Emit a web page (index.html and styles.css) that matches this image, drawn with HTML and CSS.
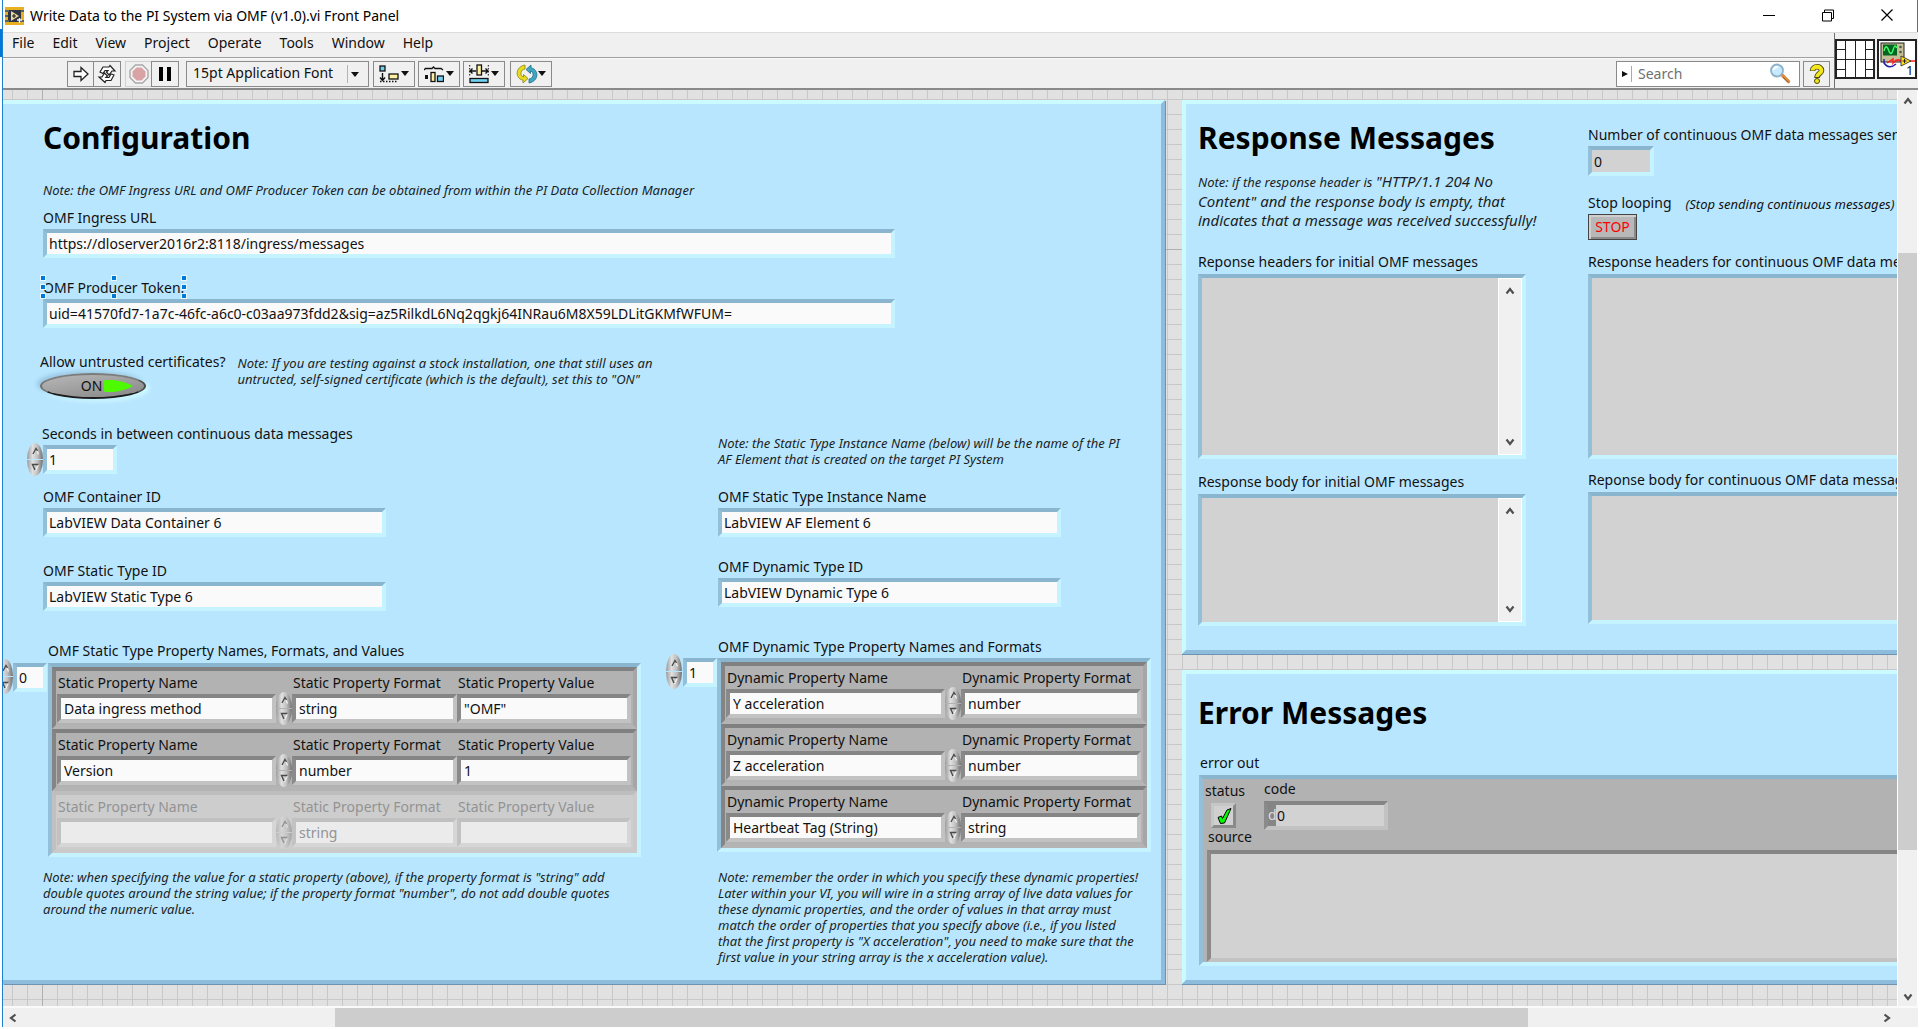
FILE: index.html
```html
<!DOCTYPE html>
<html lang="en">
<head>
<meta charset="utf-8">
<title>Write Data to the PI System via OMF (v1.0).vi Front Panel</title>
<link rel="stylesheet" href="styles.css">
</head>
<body>
<svg class="defs" aria-hidden="true">
  <symbol id="up" viewBox="0 0 15 16"><path d="M5 11.500L8 5.500L10.500 11.500" fill="none" stroke="#f4f4f4" stroke-width="1.200"/><path d="M5 11L8 5.500L9.500 8" fill="none" stroke="#4a4a4a" stroke-width="1.400"/></symbol>
  <symbol id="down" viewBox="0 0 15 16"><path d="M10.500 4.500L7.500 11" fill="none" stroke="#f4f4f4" stroke-width="1.200"/><path d="M10.500 4.500H4.500L7 10" fill="none" stroke="#4a4a4a" stroke-width="1.400"/></symbol>
  <symbol id="chev" viewBox="0 0 12 12"><path d="M2.500 8.500L6 4L9.500 8.500" fill="none" stroke="#505050" stroke-width="2.200"/></symbol>
  <symbol id="tri" viewBox="0 0 8 5"><path d="M0 0H8L4 5Z" fill="#111"/></symbol>
</svg>
<div class="window">
  <header class="titlebar">
    <svg class="appicon" viewBox="0 0 19 18"><rect width="19" height="18" fill="#e8b020"/><rect x="3" y="3" width="13" height="12" fill="#2e3440"/><path d="M0 4H4M0 9H3M0 14H4M16 4H19M16 14H19" stroke="#57606e" stroke-width="2"/><path d="M6 4L14 9L6 14Z" fill="#e9d9a0"/><path d="M7 9H11M9 7V11" stroke="#222" stroke-width="1.200"/><path d="M12 13H17M14.500 11V16" stroke="#f4f4f4" stroke-width="1.400"/></svg>
    <span class="title">Write Data to the PI System via OMF (v1.0).vi Front Panel</span>
    <div class="winbtns">
      <button aria-label="Minimize"><svg viewBox="0 0 14 14"><path d="M1 7.500H13" stroke="#000"/></svg></button>
      <button aria-label="Restore"><svg viewBox="0 0 14 14" fill="none" stroke="#000"><path d="M1.500 4.500H10.500V13H1.500ZM3.500 4.500V2H12.500V10.500H10.500"/></svg></button>
      <button aria-label="Close"><svg viewBox="0 0 14 14"><path d="M1.500 1.500L12.500 12.500M12.500 1.500L1.500 12.500" stroke="#000" stroke-width="1.200"/></svg></button>
    </div>
  </header>
  <div class="bars">
    <div class="barstack">
      <nav class="menubar"><a href="#">File</a><a href="#">Edit</a><a href="#">View</a><a href="#">Project</a><a href="#">Operate</a><a href="#">Tools</a><a href="#">Window</a><a href="#">Help</a></nav>
      <div class="toolbar">
        <div class="pair">
          <button class="tb" aria-label="Run"><svg width="18" height="18" viewBox="0 0 18 18"><path d="M2 6.500H9V2.500L16 9L9 15.500V11.500H2Z" fill="#fff" stroke="#222" stroke-width="1.300"/></svg></button>
          <button class="tb" aria-label="Run continuously"><svg width="20" height="20" viewBox="0 0 20 20" fill="#fff" stroke="#222" stroke-width="1.200"><path d="M3 8L6 3H12L13 1.500L18 7H15L12 11L9.500 8L11 6.500H8L6 9.500Z"/><path d="M17 11L14 16.500H9L8 18.500L2 13H5L7.500 9L10.500 12L9 13.500H12L14 10Z"/></svg></button>
        </div>
        <div class="pair">
          <button class="tb off" aria-label="Abort"><svg width="20" height="20" viewBox="0 0 20 20"><path d="M6.500 1H13.500L19 6.500V13.500L13.500 19H6.500L1 13.500V6.500Z" fill="#f4f4f4" stroke="#a8a8a8" stroke-width="1.400"/><path d="M7.500 3.500H12.500L16.500 7.500V12.500L12.500 16.500H7.500L3.500 12.500V7.500Z" fill="#d9a3a6"/></svg></button>
          <button class="tb" aria-label="Pause"><svg width="14" height="14" viewBox="0 0 14 14"><path d="M1 0H5V14H1ZM9 0H13V14H9Z" fill="#000"/></svg></button>
        </div>
        <div class="fontbox">
          <select aria-label="Text settings"><option>15pt Application Font</option></select>
          <svg class="tri" width="8" height="5"><use href="#tri"/></svg>
        </div>
        <button class="tb drop" aria-label="Align objects"><svg width="20" height="20" viewBox="0 0 20 20"><rect x="1" y="2" width="5" height="5" fill="#6fd0f0" stroke="#111" stroke-width="1.300"/><path d="M3.500 9V16M1 13.500L3.500 16.500L6 13.500" stroke="#111" fill="none" stroke-width="1.400"/><rect x="10" y="10" width="9" height="5" fill="#fdf0a0" stroke="#111" stroke-width="1.300"/><path d="M1 17.500H18" stroke="#111" stroke-width="1.300" stroke-dasharray="1.500 1.500"/></svg><svg class="tri" width="8" height="5"><use href="#tri"/></svg></button>
        <button class="tb drop" aria-label="Distribute objects"><svg width="20" height="20" viewBox="0 0 20 20"><path d="M0 6L1.500 4.500H8L9.500 3L11 4.500H17L19 6" stroke="#111" fill="none" stroke-width="1.300"/><rect x="1" y="11" width="3" height="4" fill="#111"/><rect x="7" y="8.500" width="4" height="9" fill="#fdf0a0" stroke="#111" stroke-width="1.300"/><rect x="13.500" y="12" width="6" height="5.500" fill="#6fd0f0" stroke="#111" stroke-width="1.300"/></svg><svg class="tri" width="8" height="5"><use href="#tri"/></svg></button>
        <button class="tb drop" aria-label="Resize objects"><svg width="20" height="20" viewBox="0 0 20 20"><path d="M0.700 1V13M19.300 1V13" stroke="#111" stroke-dasharray="1.500 1.500"/><path d="M1 7H7M13 7H19M3.500 4.500L1 7L3.500 9.500M16.500 4.500L19 7L16.500 9.500" stroke="#111" stroke-width="1.400" fill="none"/><rect x="8" y="1" width="4.500" height="10" fill="#fdf0a0" stroke="#111" stroke-width="1.300"/><rect x="1" y="14.500" width="18" height="4" fill="#6fd0f0" stroke="#111" stroke-width="1.300"/></svg><svg class="tri" width="8" height="5"><use href="#tri"/></svg></button>
        <button class="tb drop reorder" aria-label="Reorder"><svg width="22" height="20" viewBox="0 0 22 20"><path d="M9 1C3 2 0 7 1.500 11.500C2.500 14.500 5 16 7 16V19L12 14.500L7.500 10.500V13C5.500 12.500 4.500 10.500 5 8.500C5.500 6 7 5.500 9 5Z" fill="#e8dc20" stroke="#8c8210" stroke-width=".8"/><path d="M13 19C19 18 22 13 20.500 8.500C19.500 5.500 17 4 15 4V1L10 5.500L14.500 9.500V7C16.500 7.500 17.500 9.500 17 11.500C16.500 14 15 14.500 13 15Z" fill="#3fa7c4" stroke="#1f6c84" stroke-width=".8"/></svg><svg class="tri" width="8" height="5"><use href="#tri"/></svg></button>
        <div class="search">
          <svg width="12" height="18" viewBox="0 0 12 18"><path d="M1 6V12L7 9Z" fill="#111"/><path d="M10.500 1V17" stroke="#aaa"/></svg>
          <input type="text" placeholder="Search" aria-label="Search">
          <svg width="22" height="21" viewBox="0 0 22 21"><path d="M12 11L19.500 18.500" stroke="#e08a3c" stroke-width="3.500" stroke-linecap="round"/><path d="M14 14L19.500 19.500" stroke="#7d6a60" stroke-width="1"/><circle cx="8" cy="7.500" r="6" fill="#c6eaff" stroke="#8fb0c8" stroke-width="1.800"/><path d="M4.500 7A4 4 0 0 1 9 4" stroke="#fff" stroke-width="2" fill="none"/></svg>
        </div>
        <button class="tb help" aria-label="Context help"><svg width="16" height="20" viewBox="0 0 16 20"><path d="M3.500 7C3.500 1.500 12.500 1.500 12.500 6.500C12.500 9.500 8 9.500 8 14" fill="none" stroke="#4a4a10" stroke-width="5.600"/><path d="M3.500 6.500C3.500 1.500 12.500 1.500 12.500 6.500C12.500 9.500 8 9.500 8 13" fill="none" stroke="#f5e61c" stroke-width="3.800"/><circle cx="8" cy="17" r="2.500" fill="#f5e61c" stroke="#4a4a10"/></svg></button>
      </div>
    </div>
    <div class="vi">
      <svg width="40" height="40" viewBox="0 0 40 40"><rect x="1" y="1" width="38" height="38" fill="#fff" stroke="#222" stroke-width="2"/><path d="M10.500 1V39M20.500 1V39M30.500 1V39M1 20.500H39M1 10.500H10.500M1 30.500H10.500M30.500 10.500H39M30.500 30.500H39" stroke="#222"/></svg>
      <svg width="40" height="40" viewBox="0 0 40 40"><rect x="1" y="1" width="38" height="38" fill="#fff" stroke="#222" stroke-width="2"/><rect x="4" y="4" width="23" height="19" fill="#c5bf96" stroke="#222"/><rect x="6" y="5.500" width="14" height="11" fill="#062"/><path d="M7 12Q9 4 11.500 11T16 11T19.500 9" fill="none" stroke="#4f6" stroke-width="1.400"/><circle cx="23.500" cy="8" r="1.300" fill="#555"/><circle cx="23.500" cy="13" r="1.300" fill="#555"/><path d="M7 20V24Q12 31 19 25" fill="none" stroke="#22a" stroke-width="1.500"/><path d="M10 24L16 20V24Q20 19 24 22H38" fill="none" stroke="#f22" stroke-width="1.500"/><path d="M24 17V27L34 22Z" fill="#fd2" stroke="#222" stroke-width=".8"/><path d="M25.500 22H29.500M27.500 20V24" stroke="#222"/><text x="29" y="36" class="vinum">1</text></svg>
    </div>
  </div>

  <div class="view">
    <main class="canvas">
      <section class="panel config">
        <h1>Configuration</h1>
        <p class="note">Note: the OMF Ingress URL and OMF Producer Token can be obtained from within the PI Data Collection Manager</p>
        <label class="field wide ingress"><span>OMF Ingress URL</span><input type="text" value="https://dloserver2016r2:8118/ingress/messages"></label>
        <label class="field wide producer"><span class="selected">OMF Producer Token:<i></i><i></i><i></i><i></i><i></i><i></i><i></i><i></i></span><input type="text" value="uid=41570fd7-1a7c-46fc-a6c0-c03aa973fdd2&amp;sig=az5RilkdL6Nq2qgkj64INRau6M8X59LDLitGKMfWFUM="></label>
        <div class="certs">
          <div><label for="allow">Allow untrusted certificates?</label>
          <button id="allow" class="toggle"><span>ON</span><svg width="30" height="12" viewBox="0 0 30 12"><path d="M0 1Q1 0 2 0H10Q22 2 29 6Q22 10 10 12H2Q0 12 0 11Z" fill="#4dfa00"/></svg></button></div>
          <p class="note">Note: If you are testing against a stock installation, one that still uses an<br>untructed, self-signed certificate (which is the default), set this to "ON"</p>
        </div>
        <div class="cols">
          <div class="left">
            <div class="field seconds"><label for="secs">Seconds in between continuous data messages</label>
              <div class="numeric"><span class="spin"><button aria-label="Increase"><svg><use href="#up"/></svg></button><button aria-label="Decrease"><svg><use href="#down"/></svg></button></span><input id="secs" type="text" value="1"></div></div>
            <label class="field mid cont"><span>OMF Container ID</span><input type="text" value="LabVIEW Data Container 6"></label>
            <label class="field mid stat"><span>OMF Static Type ID</span><input type="text" value="LabVIEW Static Type 6"></label>
            <div class="arrlabel">OMF Static Type Property Names, Formats, and Values</div>
            <div class="arrayrow">
              <span class="spin cut"><button aria-label="Next"><svg><use href="#up"/></svg></button><button aria-label="Previous"><svg><use href="#down"/></svg></button></span>
              <input class="index" type="text" value="0" aria-label="Static index">
              <div class="array three">
                <div class="cluster"><label><span>Static Property Name</span><input type="text" value="Data ingress method"></label><span class="spin"><button aria-label="Next"><svg><use href="#up"/></svg></button><button aria-label="Previous"><svg><use href="#down"/></svg></button></span><label><span>Static Property Format</span><input type="text" value="string"></label><label><span>Static Property Value</span><input type="text" value="&quot;OMF&quot;"></label></div>
                <div class="cluster"><label><span>Static Property Name</span><input type="text" value="Version"></label><span class="spin"><button aria-label="Next"><svg><use href="#up"/></svg></button><button aria-label="Previous"><svg><use href="#down"/></svg></button></span><label><span>Static Property Format</span><input type="text" value="number"></label><label><span>Static Property Value</span><input type="text" value="1"></label></div>
                <div class="cluster dim"><label><span>Static Property Name</span><input type="text" value=""></label><span class="spin"><button aria-label="Next"><svg><use href="#up"/></svg></button><button aria-label="Previous"><svg><use href="#down"/></svg></button></span><label><span>Static Property Format</span><input type="text" value="string"></label><label><span>Static Property Value</span><input type="text" value=""></label></div>
              </div>
            </div>
            <p class="note">Note: when specifying the value for a static property (above), if the property format is "string" add<br>double quotes around the string value; if the property format "number", do not add double quotes<br>around the numeric value.</p>
          </div>
          <div class="right">
            <p class="note first">Note: the Static Type Instance Name (below) will be the name of the PI<br>AF Element that is created on the target PI System</p>
            <label class="field mid inst"><span>OMF Static Type Instance Name</span><input type="text" value="LabVIEW AF Element 6"></label>
            <label class="field mid dyn"><span>OMF Dynamic Type ID</span><input type="text" value="LabVIEW Dynamic Type 6"></label>
            <div class="arrlabel">OMF Dynamic Type Property Names and Formats</div>
            <div class="arrayrow">
              <span class="spin"><button aria-label="Next"><svg><use href="#up"/></svg></button><button aria-label="Previous"><svg><use href="#down"/></svg></button></span>
              <input class="index" type="text" value="1" aria-label="Dynamic index">
              <div class="array two">
                <div class="cluster"><label><span>Dynamic Property Name</span><input type="text" value="Y acceleration"></label><span class="spin"><button aria-label="Next"><svg><use href="#up"/></svg></button><button aria-label="Previous"><svg><use href="#down"/></svg></button></span><label><span>Dynamic Property Format</span><input type="text" value="number"></label></div>
                <div class="cluster"><label><span>Dynamic Property Name</span><input type="text" value="Z acceleration"></label><span class="spin"><button aria-label="Next"><svg><use href="#up"/></svg></button><button aria-label="Previous"><svg><use href="#down"/></svg></button></span><label><span>Dynamic Property Format</span><input type="text" value="number"></label></div>
                <div class="cluster"><label><span>Dynamic Property Name</span><input type="text" value="Heartbeat Tag (String)"></label><span class="spin"><button aria-label="Next"><svg><use href="#up"/></svg></button><button aria-label="Previous"><svg><use href="#down"/></svg></button></span><label><span>Dynamic Property Format</span><input type="text" value="string"></label></div>
              </div>
            </div>
            <p class="note">Note: remember the order in which you specify these dynamic properties!<br>Later within your VI, you will wire in a string array of live data values for<br>these dynamic properties, and the order of values in that array must<br>match the order of properties that you specify above (i.e., if you listed<br>that the first property is "X acceleration", you need to make sure that the<br>first value in your string array is the x acceleration value).</p>
          </div>
        </div>
      </section>

      <div class="side">
        <section class="panel response">
          <div class="rleft">
            <h1>Response Messages</h1>
            <p class="bignote"><small>Note: if the response header is </small>"HTTP/1.1 204 No<br>Content" and the response body is empty, that<br>indicates that a message was received successfully!</p>
            <label for="rh1">Reponse headers for initial OMF messages</label>
            <div class="memo tall"><textarea id="rh1" readonly></textarea><div class="mscroll"><svg><use href="#chev"/></svg><svg class="flip"><use href="#chev"/></svg></div></div>
            <label for="rb1">Response body for initial OMF messages</label>
            <div class="memo short"><textarea id="rb1" readonly></textarea><div class="mscroll"><svg><use href="#chev"/></svg><svg class="flip"><use href="#chev"/></svg></div></div>
          </div>
          <div class="rright">
            <label class="field count"><span>Number of continuous OMF data messages sent</span><input type="text" value="0" readonly></label>
            <div class="stoprow"><label for="stop">Stop looping</label><em>(Stop sending continuous messages)</em></div>
            <button id="stop" class="stop">STOP</button>
            <label for="rh2">Response headers for continuous OMF data messages</label>
            <div class="memo tall"><textarea id="rh2" readonly></textarea></div>
            <label class="lift" for="rb2">Reponse body for continuous OMF data messages</label>
            <div class="memo short2"><textarea id="rb2" readonly></textarea></div>
          </div>
        </section>
        <section class="panel errors">
          <h1>Error Messages</h1>
          <div class="errlabel">error out</div>
          <div class="errbox">
            <div class="errtop">
              <div class="status"><span>status</span><button aria-label="No error"><svg width="18" height="18" viewBox="0 0 18 18"><path d="M3 10.500L6.500 9L7.500 11.500L12 3L16 1.500L9.500 16L5.500 16.500Z" fill="#0f0" stroke="#000"/></svg></button></div>
              <div class="code"><label for="code">code</label><div class="codebox"><b>d</b><input id="code" type="text" value="0" readonly></div></div>
            </div>
            <label class="srclabel" for="src">source</label>
            <textarea id="src" class="source" readonly></textarea>
          </div>
        </section>
      </div>
    </main>
    <div class="vbar"><svg><use href="#chev"/></svg><i class="v1"></i><i class="v2"></i><i class="v3"></i><svg class="flip"><use href="#chev"/></svg></div>
  </div>
  <div class="hbar"><svg class="lt"><use href="#chev"/></svg><i class="h1"></i><i class="h2"></i><i class="h3"></i><svg class="rt"><use href="#chev"/></svg></div>
</div>
</body>
</html>
```
FILE: styles.css
```css
* { box-sizing: border-box; }
body {
  margin: 0;
  padding: 0 2px 2px;
  min-height: 100vh;
  display: flex;
  font: 14px/20px "Noto Sans", "Open Sans", sans-serif;
  color: #111;
  background: linear-gradient(#0078d7, #0078d7) 0 29px / 2px 28px no-repeat #fff;
  overflow-x: hidden;
}
.defs { position: absolute; width: 0; height: 0; }
button, input, textarea, select { font: inherit; color: inherit; margin: 0; padding: 0; border-radius: 0; outline: 0; }
button { background: none; border: 0; display: flex; align-items: center; justify-content: center; }
svg { flex: none; display: block; }
h1, p { margin: 0; }
h1 { font-size: 30px; line-height: 40px; font-weight: 700; color: #000; white-space: nowrap; }
label, label > span { display: block; white-space: nowrap; }
a { color: inherit; text-decoration: none; }

.window { flex: 1; min-width: 0; display: flex; flex-direction: column; border-left: 1px solid #1f7fd0; }
.titlebar { height: 32px; display: flex; align-items: center; padding-left: 2px; background: #fff; border-right: 1px solid #1f7fd0; }
.appicon { width: 19px; height: 18px; margin-right: 6px; }
.title { flex: 1; color: #000; }
.winbtns { display: flex; gap: 45px; padding: 0 23px 3px 0; }
.winbtns svg { width: 14px; height: 14px; }

.bars { display: flex; background: #f0f0f0; border-top: 1px solid #dcdcdc; border-bottom: 2px solid #8a8a8a; }
.barstack { flex: 1; }
.menubar { height: 25px; display: flex; gap: 18px; padding-left: 9px; border-bottom: 1px solid #a0a0a0; }
.toolbar { height: 30px; display: flex; align-items: center; padding: 0 4px 0 64px; border-top: 1px solid #fafafa; }
.pair { display: flex; margin-right: 4px; }
.pair + .pair { margin-right: 7px; }
.tb { height: 26px; width: 27px; border: 1px solid #8a8a8a; }
.pair .tb + .tb { margin-left: -1px; width: 28px; }
.tb.off { border-color: #d0d0d0; }
.tb.drop { width: 42px; margin-right: 3px; gap: 2px; }
.tb.reorder { margin-left: 2px; gap: 0; }
.fontbox { position: relative; width: 183px; height: 26px; margin-right: 4px; border: 1px solid #8a8a8a; }
.fontbox select { appearance: none; width: 100%; height: 24px; padding: 0 0 2px 6px; border: 0; background: linear-gradient(#b4b4b4, #b4b4b4) 160px 3px / 1px 18px no-repeat; }
.fontbox .tri { position: absolute; right: 9px; top: 10px; }
.search { margin-left: auto; width: 184px; height: 26px; display: flex; align-items: center; padding: 0 8px 0 4px; gap: 5px; background: #fff; border: 1px solid #8a8a8a; }
.search input { flex: 1; min-width: 0; border: 0; background: none; }
.search input::placeholder { color: #707070; opacity: 1; }
.help { margin-left: 3px; }
.vi { display: flex; gap: 2px; padding: 6px 1px 0 0; border-left: 1px solid #707070; }
.vinum { font: 13px "Noto Sans", sans-serif; fill: #111; }

.view { flex: 1; display: flex; }
.canvas {
  flex: 1;
  min-width: 0;
  display: grid;
  grid-template-columns: minmax(0, 1162fr) minmax(0, 716fr);
  gap: 17px;
  padding: 10px 0 22px;
  overflow: hidden;
  background:
    linear-gradient(#b0b0b0, #b0b0b0) 39px 0 / 1px 100% no-repeat,
    linear-gradient(#b0b0b0, #b0b0b0) 0 159px / 100% 1px no-repeat,
    linear-gradient(90deg, #c8c8c8 1px, transparent 1px) 9px 9px / 15px 15px,
    linear-gradient(#c8c8c8 1px, transparent 1px) 9px 9px / 15px 15px,
    #e1e1e1;
}
.panel {
  background: #b9e6ff;
  border: 4px solid;
  border-color: #cbfbff #8dbcdc #8dbcdc #cbfbff;
  box-shadow: 0 1px 0 #6d93b0;
  overflow: hidden;
}
.config { border-left: 0; padding: 14px 0 13px; box-shadow: 1px 1px 0 #6d93b0; }
.config > h1, .config > .note, .config > .field { margin-left: 40px; }
.note { font-size: 13px; line-height: 16px; font-style: italic; white-space: nowrap; color: #1a1f24; }
.config > .note { margin-top: 24px; }

.field input { display: block; margin-top: 1px; }
input[type="text"] { min-width: 0; }
.field input, .index, .cluster input, .codebox {
  height: 29px;
  padding: 0 2px;
  background: #fafafa;
  border: 4px solid;
  border-color: #8ab5cf #c5f3ff #c5f3ff #93bfd8;
}
.wide input { width: 852px; max-width: 100%; }
.mid input { width: 343px; max-width: 100%; }
.ingress { margin-top: 10px; }
.producer { margin-top: 20px; }
.selected { position: relative; width: 141px; }
.selected i { position: absolute; box-sizing: content-box; width: 4px; height: 4px; background: #0078d7; border: 1px solid #e8f8ff; }
.selected i:nth-child(1) { left: -3px; top: -3px; }
.selected i:nth-child(2) { left: 68px; top: -3px; }
.selected i:nth-child(3) { right: -3px; top: -3px; }
.selected i:nth-child(4) { left: -3px; top: 6px; }
.selected i:nth-child(5) { right: -3px; top: 6px; }
.selected i:nth-child(6) { left: -3px; top: 15px; }
.selected i:nth-child(7) { left: 68px; top: 15px; }
.selected i:nth-child(8) { right: -3px; top: 15px; }

.certs { display: flex; gap: 12px; margin: 24px 0 0 37px; height: 48px; }
.certs .note { padding-top: 3px; }
.toggle {
  width: 106px; height: 26px; margin: 1px 0 0; padding-left: 29px; gap: 2px;
  border: 2px solid; border-color: #7c7c7c #4a4a4a #1c1c1c #707070; border-radius: 50%;
  background: linear-gradient(170deg, #b8b8b8, #868686);
  box-shadow: -3px -2px 5px #95c3de, 3px 2px 5px #d4ffff;
}

.cols { display: grid; grid-template-columns: 663px minmax(0, 1fr); margin-top: 24px; }
.left > .field, .left > .note { margin-left: 40px; }
.left > .seconds { margin-left: 24px; }
.seconds > label { padding-left: 15px; }
.numeric { display: flex; align-items: center; height: 30px; }
.numeric input { width: 74px; }
.cont { margin-top: 13px; }
.stat { margin-top: 24px; }
.left .arrlabel { margin: 30px 0 2px 45px; }
.left > .note { margin-top: 12px; }
.right > .field, .right > .note, .right > .arrlabel { margin-left: 52px; }
.inst { margin-top: 20px; }
.dyn { margin-top: 20px; }
.right > .arrlabel { margin-top: 30px; margin-bottom: 1px; }
.right > .note { margin-top: 17px; }
.right > .note.first { margin-top: 11px; }

.spin { display: flex; flex-direction: column; gap: 1px; width: 16px; height: 33px; overflow: hidden; }
.spin button { flex: 1; width: 16px; background: linear-gradient(90deg, #9a9a9a, #e0e0e0 35%, #c0c0c0 65%, #707070); border-radius: 50% 50% 0 0 / 100% 100% 0 0; }
.spin button + button { border-radius: 0 0 50% 50% / 0 0 100% 100%; }
.spin svg { width: 15px; height: 16px; }
.arrayrow { display: flex; align-items: flex-start; }
.arrayrow > .spin { margin: -4px 1px 0 0; height: 35px; }
.arrayrow > .cut { width: 10px; direction: rtl; margin-right: 0; }
.index { width: 34px; }
.array { border: 4px solid; border-color: #8ab5cf #c5f3ff #c5f3ff #93bfd8; }
.cluster {
  display: grid; align-items: end; padding: 2px 0 2px 1px;
  background: #b2b2b2; border: 4px solid; border-color: #808080 #a6a6a6 #b4b4b4 #848484;
}
.three { width: 593px; margin-left: 1px; }
.two { width: 434px; }
.three .cluster { grid-template-columns: 219px 16px 165px 174px; }
.two .cluster { grid-template-columns: 219px 16px 180px; }
.cluster .spin { margin-bottom: -2px; }
.cluster label > span { padding-left: 1px; }
.cluster input { display: block; width: 100%; margin-top: 1px; padding-left: 3px; }
.cluster input, .codebox { border-color: #858585 #c2c2c2 #c2c2c2 #8a8a8a; }
.dim { background: #cdcdcd; border-color: #bdbdbd #cacaca #cacaca #c0c0c0; color: #939393; }
.dim input { background: #ebebeb; border-color: #c0c0c0 #d6d6d6 #d6d6d6 #c2c2c2; }
.dim .spin { opacity: 0.45; }

.side { display: flex; flex-direction: column; gap: 16px; min-width: 0; }
.side .panel { border-right: 0; }
.response { display: grid; grid-template-columns: 390px minmax(0, 1fr); padding: 14px 0 24px 12px; }
.rright { overflow: hidden; }
.bignote { margin: 14px 0 22px; font-size: 15px; line-height: 19px; font-style: italic; color: #1a1f24; white-space: nowrap; }
.bignote small { font-size: 13px; }
.memo { display: flex; border: 4px solid; border-color: #8ab5cf #c5f3ff #c5f3ff #93bfd8; background: #d2d2d2; margin-top: 2px; }
.memo textarea { flex: 1; min-width: 0; border: 0; background: none; resize: none; }
.rleft .memo { width: 328px; }
.rright .memo { border-right: 0; }
.tall { height: 185px; margin-bottom: 13px; }
.short { height: 132px; }
.short2 { height: 132px; }
.lift { margin-top: -2px; }
.mscroll { width: 24px; background: #f0f0f0; border: 1px solid #fff; display: flex; flex-direction: column; align-items: center; justify-content: space-between; padding: 6px 0; }
.mscroll svg { width: 12px; height: 12px; }
.flip { transform: rotate(180deg); }
.lt { transform: rotate(-90deg); }
.rt { transform: rotate(90deg); }
.count { padding-top: 7px; }
.count input { width: 66px; height: 30px; background: #d2d2d2; }
.stoprow { display: flex; gap: 14px; margin-top: 17px; }
.stoprow em { font-size: 13px; line-height: 22px; white-space: nowrap; }
.stop { width: 49px; height: 26px; margin: -1px 0 12px; color: #f00; background: #b8b8b8; border: 1px solid #444; box-shadow: inset 2px 2px 0 #cfcfcf, inset -2px -2px 0 #8a8a8a; }

.errors { flex: 1; padding: 19px 0 12px 12px; }
.errlabel { margin: 20px 0 2px 2px; }
.errbox { margin-left: 1px; padding: 0 0 0 4px; background: #b2b2b2; border: 4px solid; border-color: #8ab5cf #c5f3ff #c5f3ff #93bfd8; border-right: 0; }
.errtop { display: flex; gap: 17px; height: 48px; }
.status { margin-left: -2px; }
.status + .code { margin-left: 2px; }
.status span { display: block; line-height: 24px; }
.status button { width: 25px; height: 25px; margin-left: 6px; background: #d0d0d0; border: 3px solid; border-color: #c6c6c6 #8a8a8a #8a8a8a #c6c6c6; }
.codebox { width: 124px; display: flex; padding: 0; background: #d2d2d2; margin-top: 2px; }
.codebox b { width: 8px; background: #858585; color: #ddd; font-weight: 400; text-align: center; overflow: hidden; }
.codebox input { flex: 1; border: 0; background: none; padding: 0 1px; }
.srclabel { padding-left: 1px; }
.source { display: block; width: 100%; height: 112px; margin-top: 3px; resize: none; background: #d2d2d2; border: 4px solid; border-color: #858585 #c2c2c2 #c2c2c2 #8a8a8a; border-right: 0; }

.vbar { width: 19px; margin-right: 1px; box-shadow: -1px 0 0 #fff; background: #f0f0f0; display: flex; flex-direction: column; align-items: center; padding: 5px 0 3px; }
.vbar svg, .hbar svg { width: 12px; height: 12px; }
.vbar i { width: 19px; }
.v1 { flex: 146; }
.v2 { flex: 597; background: #cdcdcd; }
.v3 { flex: 141; }
.hbar { height: 21px; background: #f0f0f0; border-top: 2px solid #fafafa; display: flex; align-items: center; padding: 0 25px 0 4px; }
.h1 { flex: 316; }
.h2 { flex: 1192; background: #cdcdcd; align-self: stretch; }
.h3 { flex: 353; }
```
